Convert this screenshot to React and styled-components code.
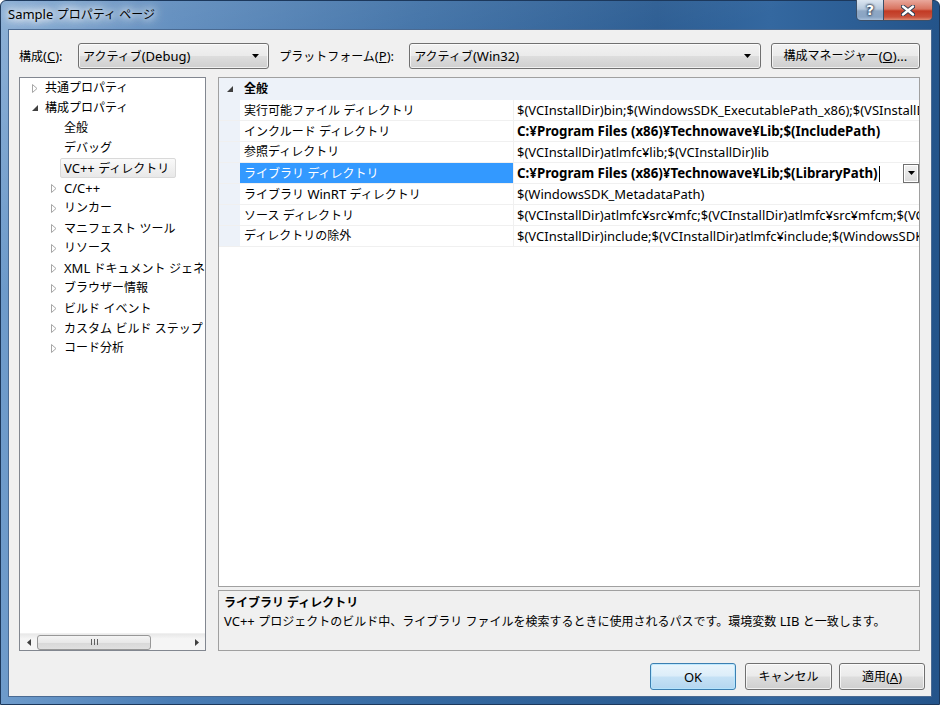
import React from 'react';
import styled, { createGlobalStyle } from 'styled-components';

const UI_FONT = `"Noto Sans", "Noto Sans CJK JP", sans-serif`;

const GlobalStyle = createGlobalStyle`
  html, body {
    margin: 0;
    padding: 0;
    background: #fff;
  }
  body {
    font-family: ${UI_FONT};
    font-size: 12px;
    color: #000;
  }
  * {
    box-sizing: border-box;
  }
`;

// Latin runs are drawn a bit larger so they get the width of the original UI font
const Latin = styled.span`
  font-size: 13px;
`;

const U = styled(Latin)`
  text-decoration: underline;
`;

const mix = s =>
  s
    .split(/([\x20-\x7e\u00a5]+)/)
    .filter(Boolean)
    .map((part, i) => (/^[\x20-\x7e\u00a5]+$/.test(part) ? <Latin key={i}>{part}</Latin> : part));

// ---- window frame ----

const Frame = styled.div`
  width: 940px;
  height: 705px;
  display: flex;
  flex-direction: column;
  padding: 0 7px 7px 7px;
  border: 1px solid #1c385c;
  border-radius: 6px 6px 0 0;
  background:
    linear-gradient(160deg, rgba(255, 255, 255, 0.22) 0%, rgba(255, 255, 255, 0) 28%),
    linear-gradient(to right, #6e9bcb 0%, #4a7db5 18%, #3569a1 45%, #2b5c92 70%, #3468a0 82%, #24548a 100%);
`;

const TitleBar = styled.div`
  height: 28px;
  display: flex;
  align-items: flex-start;
  justify-content: space-between;
`;

const TitleText = styled.div`
  margin-top: 4px;
  padding: 0 6px 0 0;
  line-height: 18px;
  color: #000;
  text-shadow: 0 0 6px #fff, 0 0 10px #fff, 0 0 14px #fff, 0 0 14px #fff;
`;

const CaptionButtons = styled.div`
  display: flex;
  margin-top: -1px;
  margin-right: -1px;
  border: 1px solid #3b4f68;
  border-top: none;
  border-radius: 0 0 5px 5px;
  overflow: hidden;
`;

const CaptionButton = styled.div`
  width: ${p => p.$w}px;
  height: 20px;
  display: flex;
  align-items: center;
  justify-content: center;
  color: #fff;
  font-family: "DejaVu Sans", sans-serif;
  font-weight: bold;
  font-size: 14px;
  text-shadow: 0 0 2px #2a3b52, 0 0 2px #2a3b52, 0 0 3px #2a3b52;
  background: ${p =>
    p.$close
      ? 'linear-gradient(#e9a89c 0%, #d8735f 45%, #c23a24 55%, #c9503a 85%, #dd8b74 100%)'
      : 'linear-gradient(#dce6f1 0%, #b6c8dc 45%, #8ea7c4 55%, #8aa5c4 85%, #a9c0da 100%)'};
  border-left: ${p => (p.$close ? '1px solid #3b4f68' : 'none')};
`;

const Client = styled.div`
  flex: 1;
  display: flex;
  flex-direction: column;
  background: #f0f0f0;
  border: 1px solid #4a6a92;
  padding: 13px 11px 6px 10px;
`;

// ---- top toolbar ----

const Toolbar = styled.div`
  height: 26px;
  display: flex;
  align-items: center;
`;

const Label = styled.span`
  width: ${p => p.$w}px;
  flex-shrink: 0;
  line-height: 18px;
  margin-left: ${p => p.$ml || 0}px;
  white-space: nowrap;
`;

const Combo = styled.div`
  width: ${p => p.$w}px;
  height: 26px;
  display: flex;
  align-items: center;
  justify-content: space-between;
  padding: 0 9px 0 4px;
  border: 1px solid #707070;
  border-radius: 3px;
  background: linear-gradient(#f2f2f2 0%, #ebebeb 48%, #dddddd 52%, #cfcfcf 100%);
  box-shadow: inset 0 0 0 1px rgba(255, 255, 255, 0.7);
  line-height: 18px;
`;

const PushButton = styled.div`
  width: ${p => p.$w}px;
  height: ${p => p.$h || 27}px;
  margin-left: ${p => p.$ml || 0}px;
  margin-right: ${p => p.$mr || 0}px;
  display: flex;
  align-items: center;
  justify-content: center;
  border: 1px solid ${p => (p.$default ? '#3c7fb1' : '#707070')};
  border-radius: 3px;
  background: ${p =>
    p.$default
      ? 'linear-gradient(#eaf5fc 0%, #dcedf9 48%, #c5e1f5 52%, #b4d6f0 100%)'
      : 'linear-gradient(#f2f2f2 0%, #ebebeb 48%, #dddddd 52%, #cfcfcf 100%)'};
  box-shadow: inset 0 0 0 1px ${p => (p.$default ? 'rgba(180, 230, 255, 0.8)' : 'rgba(255, 255, 255, 0.7)')};
  line-height: 18px;
  white-space: nowrap;
`;

const DownArrow = () => (
  <svg width="7" height="4" viewBox="0 0 7 4">
    <path d="M0 0 H7 L3.5 4 Z" fill="#000" />
  </svg>
);

// ---- main area ----

const Main = styled.div`
  flex: 1;
  display: flex;
  gap: 12px;
  margin-top: 8px;
  min-height: 0;
`;

const TreePanel = styled.div`
  width: 187px;
  display: flex;
  flex-direction: column;
  background: #fff;
  border: 1px solid #828790;
`;

const TreeList = styled.div`
  flex: 1;
  overflow: hidden;
`;

const TreeItem = styled.div`
  height: 20px;
  display: flex;
  align-items: center;
  padding-left: ${p => 8 + p.$level * 19}px;
  white-space: nowrap;
`;

const Expander = styled.span`
  width: 14px;
  height: 20px;
  margin-right: 3px;
  display: flex;
  align-items: center;
  justify-content: center;
  flex-shrink: 0;
`;

const ItemText = styled.span`
  height: 20px;
  line-height: 18px;
  margin-left: -4px;
  padding: 0 ${p => (p.$selected ? 6 : 3)}px 0 3px;
  border: 1px solid ${p => (p.$selected ? '#d9d9d9' : 'transparent')};
  border-radius: 2px;
  background: ${p => (p.$selected ? 'linear-gradient(#fafafa, #e8e8e8)' : 'transparent')};
`;

const HScroll = styled.div`
  height: 17px;
  display: flex;
  align-items: center;
  background: linear-gradient(#e8e8e8, #f5f5f5 30%, #f5f5f5);
  border-top: 1px solid #f0f0f0;
`;

const ScrollArrow = styled.div`
  width: 17px;
  height: 16px;
  display: flex;
  align-items: center;
  justify-content: center;
`;

const ScrollTrack = styled.div`
  flex: 1;
  height: 16px;
  display: flex;
  align-items: center;
`;

const ScrollThumb = styled.div`
  width: 114px;
  height: 15px;
  display: flex;
  align-items: center;
  justify-content: center;
  gap: 2px;
  border: 1px solid #979797;
  border-radius: 3px;
  background: linear-gradient(#f4f4f4 0%, #e8e8e8 50%, #d8d8d8 52%, #e0e0e0 100%);
`;

const GripLine = styled.span`
  width: 1px;
  height: 6px;
  background: #606060;
`;

const RightColumn = styled.div`
  flex: 1;
  display: flex;
  flex-direction: column;
  gap: 3px;
  min-width: 0;
`;

const Grid = styled.div`
  flex: 1;
  background: #fff;
  border: 1px solid #a0a0a0;
  overflow: hidden;
`;

const CategoryRow = styled.div`
  height: 22px;
  display: flex;
  align-items: center;
  background: #edf2f9;
  font-weight: bold;
  line-height: 18px;
`;

const CategoryExpander = styled.span`
  width: 21px;
  height: 20px;
  display: flex;
  align-items: center;
  justify-content: center;
  margin-right: 4px;
`;

const PropRow = styled.div`
  height: 21px;
  display: flex;
  border-bottom: 1px solid #f0f0f0;
`;

const Margin = styled.div`
  width: 21px;
  background: #edf2f9;
  flex-shrink: 0;
`;

const NameCell = styled.div`
  width: 274px;
  flex-shrink: 0;
  padding-left: 4px;
  line-height: 20px;
  white-space: nowrap;
  border-right: 1px solid #f0f0f0;
  color: ${p => (p.$selected ? '#fff' : '#000')};
  background: ${p => (p.$selected ? '#3399ff' : '#fff')};
`;

const ValueCell = styled.div`
  flex: 1;
  min-width: 0;
  display: flex;
  align-items: center;
  padding-left: 3px;
  line-height: 20px;
  white-space: nowrap;
  overflow: hidden;
  font-weight: ${p => (p.$bold ? 'bold' : 'normal')};
  ${Latin} {
    font-size: ${p => (p.$bold ? 13.3 : 13)}px;
  }
`;

const ValueText = styled.span`
  flex: 1;
  overflow: hidden;
`;

const Caret = styled.span`
  display: inline-block;
  width: 1px;
  height: 16px;
  margin-left: 1px;
  vertical-align: middle;
  background: #000;
`;

const CellDrop = styled.div`
  width: 16px;
  height: 19px;
  flex-shrink: 0;
  display: flex;
  align-items: center;
  justify-content: center;
  border: 1px solid #707070;
  box-shadow: inset 0 0 0 1px #fff;
  background: linear-gradient(#f2f2f2, #d9d9d9);
`;

const Description = styled.div`
  height: 61px;
  padding: 3px 5px;
  border: 1px solid #a0a0a0;
  background: #f0f0f0;
  line-height: 18px;
`;

const DescTitle = styled.div`
  font-weight: bold;
`;

const Footer = styled.div`
  height: 27px;
  margin-top: 12px;
  margin-right: -5px;
  display: flex;
  justify-content: flex-end;
  gap: 7px;
`;

// ---- little drawings ----

const Collapsed = () => (
  <svg width="6" height="9" viewBox="0 0 6 9">
    <path d="M0.5 0.5 L5 4.5 L0.5 8.5 Z" fill="#fff" stroke="#a6a6a6" />
  </svg>
);

const Expanded = () => (
  <svg width="6" height="6" viewBox="0 0 6 6">
    <path d="M6 0 L6 6 L0 6 Z" fill="#404040" />
  </svg>
);

const SmallLeft = () => (
  <svg width="4" height="7" viewBox="0 0 4 7">
    <path d="M4 0 L0 3.5 L4 7 Z" fill="#404040" />
  </svg>
);

const SmallRight = () => (
  <svg width="4" height="7" viewBox="0 0 4 7">
    <path d="M0 0 L4 3.5 L0 7 Z" fill="#404040" />
  </svg>
);

const CloseGlyph = () => (
  <svg width="14" height="11" viewBox="0 0 14 11">
    <path d="M2 1.5 L12 9.5 M12 1.5 L2 9.5" stroke="#2a3b52" strokeWidth="4.2" strokeLinecap="round" />
    <path d="M2 1.5 L12 9.5 M12 1.5 L2 9.5" stroke="#fff" strokeWidth="2.4" strokeLinecap="round" />
  </svg>
);

// ---- data ----

const treeItems = [
  { text: '共通プロパティ', level: 0, state: 'collapsed' },
  { text: '構成プロパティ', level: 0, state: 'expanded' },
  { text: '全般', level: 1 },
  { text: 'デバッグ', level: 1 },
  { text: 'VC++ ディレクトリ', level: 1, selected: true },
  { text: 'C/C++', level: 1, state: 'collapsed' },
  { text: 'リンカー', level: 1, state: 'collapsed' },
  { text: 'マニフェスト ツール', level: 1, state: 'collapsed' },
  { text: 'リソース', level: 1, state: 'collapsed' },
  { text: 'XML ドキュメント ジェネレーター', level: 1, state: 'collapsed' },
  { text: 'ブラウザー情報', level: 1, state: 'collapsed' },
  { text: 'ビルド イベント', level: 1, state: 'collapsed' },
  { text: 'カスタム ビルド ステップ', level: 1, state: 'collapsed' },
  { text: 'コード分析', level: 1, state: 'collapsed' },
];

const props = [
  {
    name: '実行可能ファイル ディレクトリ',
    value: '$(VCInstallDir)bin;$(WindowsSDK_ExecutablePath_x86);$(VSInstallDir)Common7¥Tools¥bin;$(VSInstallDir)Common7¥tools',
  },
  { name: 'インクルード ディレクトリ', value: 'C:¥Program Files (x86)¥Technowave¥Lib;$(IncludePath)', bold: true },
  { name: '参照ディレクトリ', value: '$(VCInstallDir)atlmfc¥lib;$(VCInstallDir)lib' },
  { name: 'ライブラリ ディレクトリ', value: 'C:¥Program Files (x86)¥Technowave¥Lib;$(LibraryPath)', bold: true, selected: true },
  { name: 'ライブラリ WinRT ディレクトリ', value: '$(WindowsSDK_MetadataPath)' },
  {
    name: 'ソース ディレクトリ',
    value: '$(VCInstallDir)atlmfc¥src¥mfc;$(VCInstallDir)atlmfc¥src¥mfcm;$(VCInstallDir)atlmfc¥src¥atl;$(VCInstallDir)crt¥src',
  },
  {
    name: 'ディレクトリの除外',
    value: '$(VCInstallDir)include;$(VCInstallDir)atlmfc¥include;$(WindowsSDK_IncludePath);$(MSBuildToolsPath32)',
  },
];

const App = () => {
  return (
    <>
      <GlobalStyle />
      <Frame>
        <TitleBar>
          <TitleText>{mix('Sample プロパティ ページ')}</TitleText>
          <CaptionButtons>
            <CaptionButton $w={26}>?</CaptionButton>
            <CaptionButton $w={49} $close>
              <CloseGlyph />
            </CaptionButton>
          </CaptionButtons>
        </TitleBar>

        <Client>
          <Toolbar>
            <Label $w={59}>
              構成{mix('(')}
              <U>C</U>
              {mix('):')}
            </Label>
            <Combo $w={192}>
              <span>{mix('アクティブ(Debug)')}</span>
              <DownArrow />
            </Combo>
            <Label $w={130} $ml={10}>
              プラットフォーム{mix('(')}
              <U>P</U>
              {mix('):')}
            </Label>
            <Combo $w={353}>
              <span>{mix('アクティブ(Win32)')}</span>
              <DownArrow />
            </Combo>
            <PushButton $w={150} $h={26} $ml={10}>
              構成マネージャー{mix('(')}
              <U>O</U>
              {mix(')...')}
            </PushButton>
          </Toolbar>

          <Main>
            <TreePanel>
              <TreeList>
                {treeItems.map(item => (
                  <TreeItem key={item.text} $level={item.level}>
                    <Expander>
                      {item.state === 'collapsed' && <Collapsed />}
                      {item.state === 'expanded' && <Expanded />}
                    </Expander>
                    <ItemText $selected={item.selected}>{mix(item.text)}</ItemText>
                  </TreeItem>
                ))}
              </TreeList>
              <HScroll>
                <ScrollArrow>
                  <SmallLeft />
                </ScrollArrow>
                <ScrollTrack>
                  <ScrollThumb>
                    <GripLine />
                    <GripLine />
                    <GripLine />
                  </ScrollThumb>
                </ScrollTrack>
                <ScrollArrow>
                  <SmallRight />
                </ScrollArrow>
              </HScroll>
            </TreePanel>

            <RightColumn>
              <Grid>
                <CategoryRow>
                  <CategoryExpander>
                    <Expanded />
                  </CategoryExpander>
                  全般
                </CategoryRow>
                {props.map(p => (
                  <PropRow key={p.name}>
                    <Margin />
                    <NameCell $selected={p.selected}>{mix(p.name)}</NameCell>
                    <ValueCell $bold={p.bold}>
                      <ValueText>
                        {mix(p.value)}
                        {p.selected && <Caret />}
                      </ValueText>
                      {p.selected && (
                        <CellDrop>
                          <DownArrow />
                        </CellDrop>
                      )}
                    </ValueCell>
                  </PropRow>
                ))}
              </Grid>
              <Description>
                <DescTitle>ライブラリ ディレクトリ</DescTitle>
                <div>
                  {mix(
                    'VC++ プロジェクトのビルド中、ライブラリ ファイルを検索するときに使用されるパスです。環境変数 LIB と一致します。'
                  )}
                </div>
              </Description>
            </RightColumn>
          </Main>

          <Footer>
            <PushButton $w={86} $mr={2} $default>
              {mix('OK')}
            </PushButton>
            <PushButton $w={87}>キャンセル</PushButton>
            <PushButton $w={86}>
              適用{mix('(')}
              <U>A</U>
              {mix(')')}
            </PushButton>
          </Footer>
        </Client>
      </Frame>
    </>
  );
};

export default App;
